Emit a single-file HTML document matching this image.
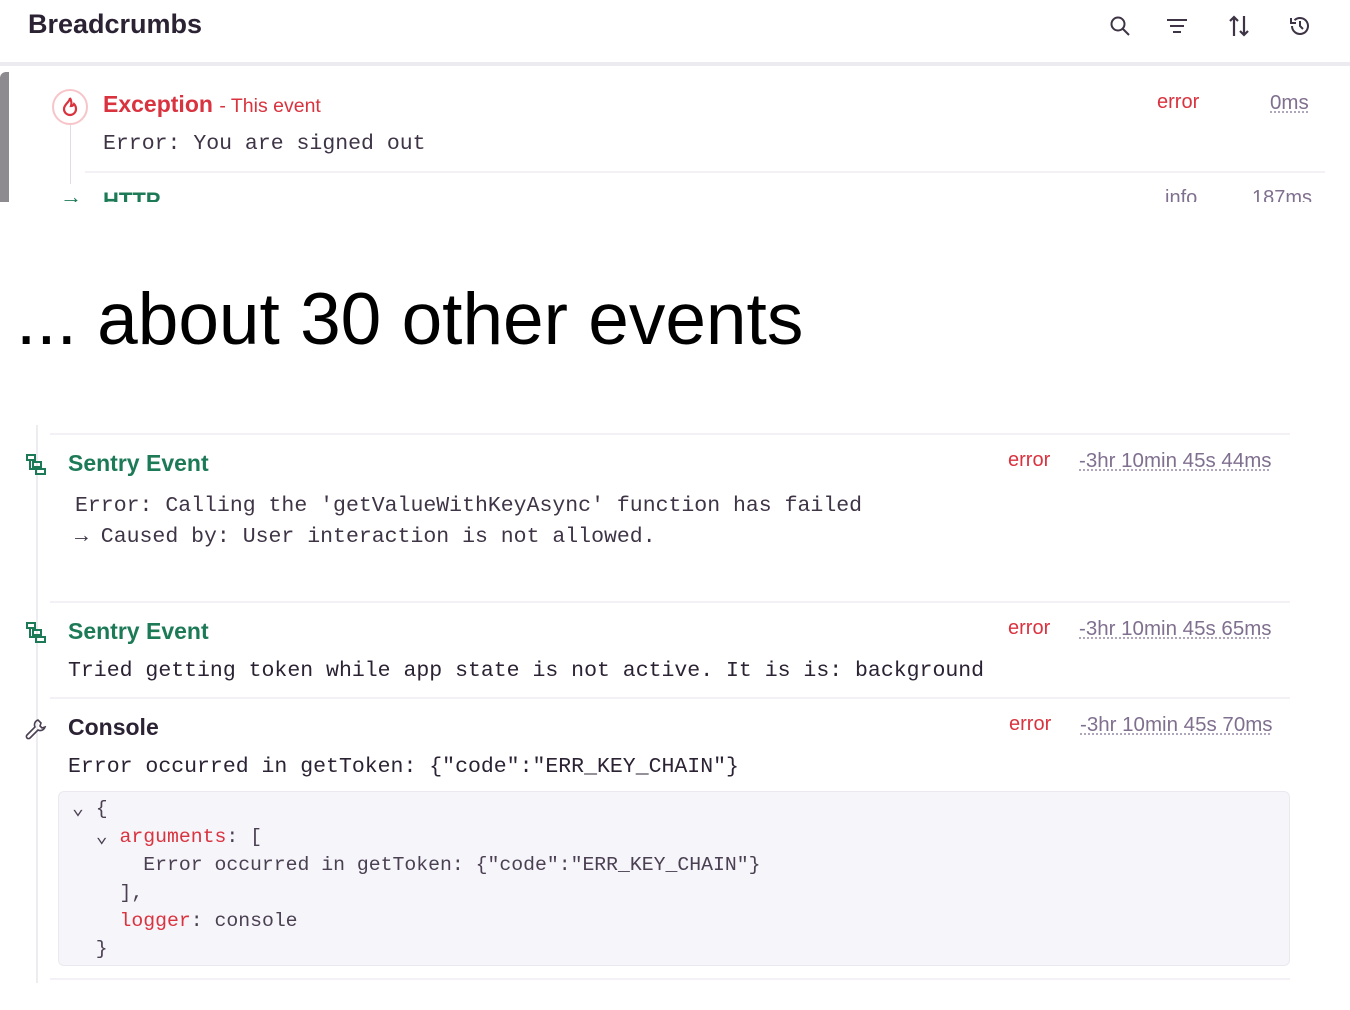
<!DOCTYPE html>
<html><head><meta charset="utf-8"><style>
*{margin:0;padding:0;box-sizing:border-box}
body{width:1350px;height:1010px;background:#fff;position:relative;overflow:hidden;font-family:"Liberation Sans",sans-serif;color:#2b2233}
.a{position:absolute;white-space:nowrap}
.mono{font-family:"Liberation Mono",monospace}
.red{color:#d9333f}
.green{color:#1d7a57;font-weight:bold}
.ts{color:#80708f;font-size:20.5px;text-decoration:underline dotted #b0a6bb}
.hr{position:absolute;height:2px;background:#f3f1f6}
</style></head><body>
<div class="a" style="left:28px;top:9px;font-size:27px;font-weight:bold;color:#2b2233">Breadcrumbs</div>
<svg class="a" style="left:1108px;top:14px" width="24" height="24" viewBox="0 0 24 24" fill="none" stroke="#3e3446" stroke-width="2"><circle cx="10" cy="10" r="6.5"/><path d="M15 15l6 6"/></svg>
<svg class="a" style="left:1165px;top:16px" width="24" height="20" viewBox="0 0 24 20" fill="none" stroke="#3e3446" stroke-width="2"><path d="M2 4h20M5 10h14M8 16h8"/></svg>
<svg class="a" style="left:1228px;top:14px" width="22" height="24" viewBox="0 0 22 24" fill="none" stroke="#3e3446" stroke-width="2.2"><path d="M6 22V3M2 7l4-4 4 4M16 2v19M12 17l4 4 4-4"/></svg>
<svg class="a" style="left:1288px;top:14px" width="24" height="24" viewBox="0 0 24 24" fill="none" stroke="#3e3446" stroke-width="2"><path d="M4 12a8 8 0 1 0 2.5-5.8"/><path d="M3 4v5h5"/><path d="M12 7v5l3 3"/></svg>
<div class="a" style="left:0;top:62px;width:1350px;height:4px;background:#ecebf0"></div>
<div class="a" style="left:0;top:72px;width:9px;height:130px;background:#8d8b8f;border-radius:6px 0 0 0"></div>
<div class="a" style="left:70px;top:122px;width:1px;height:62px;background:#e0dce5"></div>
<div class="a" style="left:52px;top:89px;width:36px;height:36px;border:2px solid #f7c5c9;border-radius:50%;background:#fff"></div>
<svg class="a" style="left:60px;top:96px" width="20" height="22" viewBox="0 0 20 22" fill="none" stroke="#d9333f" stroke-width="2.2"><path d="M10 2c0 4-6 6-6 11a6 6 0 0 0 12 0c0-3-2-5-2-5-1 2-2 2-3 2 1-3 0-6-1-8z"/></svg>
<div class="a red" style="left:103px;top:91px;font-size:23px;font-weight:bold">Exception <span style="font-size:19.5px;font-weight:normal">- This event</span></div>
<div class="a red" style="left:1157px;top:91px;font-size:20px">error</div>
<div class="a ts" style="left:1270px;top:91px">0ms</div>
<div class="a mono" style="left:103px;top:132px;font-size:21.5px;color:#3e3446">Error: You are signed out</div>
<div class="hr" style="left:85px;top:171px;width:1240px"></div>
<div style="position:absolute;left:0;top:180px;width:1350px;height:22px;overflow:hidden">
<div class="a" style="left:60px;top:4px;font-size:22px;color:#1d7a57">→</div>
<div class="a green" style="left:103px;top:8px;font-size:22px">HTTP</div>
<div class="a" style="left:1165px;top:7px;font-size:20px;color:#80708f">info</div>
<div class="a" style="left:1252px;top:7px;font-size:20px;color:#80708f">187ms</div>
</div>
<div class="a" style="left:16px;top:278px;font-size:73px;color:#000">... about 30 other events</div>

<div class="a" style="left:36px;top:425px;width:2px;height:558px;background:#eeecf1"></div>
<div class="hr" style="left:50px;top:433px;width:1240px"></div>
<svg class="a" style="left:24px;top:452px" width="24" height="24" viewBox="0 0 24 24" fill="none" stroke="#1d7a57" stroke-width="2"><rect x="3" y="3" width="8" height="5"/><rect x="9" y="10" width="8" height="5"/><rect x="12" y="17" width="9" height="5"/><path d="M6 8v9h6"/></svg>
<div class="a green" style="left:68px;top:450px;font-size:23px">Sentry Event</div>
<div class="a red" style="left:1008px;top:449px;font-size:20px">error</div>
<div class="a ts" style="left:1079px;top:449px">-3hr 10min 45s 44ms</div>
<div class="a mono" style="left:75px;top:494px;font-size:21.5px;color:#3e3446">Error: Calling the 'getValueWithKeyAsync' function has failed</div>
<div class="a mono" style="left:75px;top:525px;font-size:21.5px;color:#3e3446">→ Caused by: User interaction is not allowed.</div>

<div class="hr" style="left:50px;top:601px;width:1240px"></div>
<svg class="a" style="left:24px;top:620px" width="24" height="24" viewBox="0 0 24 24" fill="none" stroke="#1d7a57" stroke-width="2"><rect x="3" y="3" width="8" height="5"/><rect x="9" y="10" width="8" height="5"/><rect x="12" y="17" width="9" height="5"/><path d="M6 8v9h6"/></svg>
<div class="a green" style="left:68px;top:618px;font-size:23px">Sentry Event</div>
<div class="a red" style="left:1008px;top:617px;font-size:20px">error</div>
<div class="a ts" style="left:1079px;top:617px">-3hr 10min 45s 65ms</div>
<div class="a mono" style="left:68px;top:659px;font-size:21.5px;color:#2b2233">Tried getting token while app state is not active. It is is: background</div>

<div class="hr" style="left:50px;top:697px;width:1240px"></div>
<svg class="a" style="left:24px;top:717px" width="24" height="24" viewBox="0 0 24 24" fill="none" stroke="#4a4052" stroke-width="1.6"><path d="M14 3a5 5 0 0 0-3 7l-8 8a2 2 0 0 0 3 3l8-8a5 5 0 0 0 7-3l-3 1-2-2 1-3z"/></svg>
<div class="a" style="left:68px;top:714px;font-size:23px;font-weight:bold;color:#2b2233">Console</div>
<div class="a red" style="left:1009px;top:713px;font-size:20px">error</div>
<div class="a ts" style="left:1080px;top:713px">-3hr 10min 45s 70ms</div>
<div class="a mono" style="left:68px;top:755px;font-size:21.5px;color:#2b2233">Error occurred in getToken: {"code":"ERR_KEY_CHAIN"}</div>

<div class="a" style="left:58px;top:791px;width:1232px;height:175px;background:#f6f5fa;border:1px solid #ebe9ef;border-radius:6px"></div>
<div class="mono" style="position:absolute;left:72px;top:795px;font-size:19.8px;line-height:28px;color:#4a4052;white-space:pre">⌄ {
  ⌄ <span class="red">arguments</span>: [
      Error occurred in getToken: {"code":"ERR_KEY_CHAIN"}
    ],
    <span class="red">logger</span>: console
  }</div>
<div class="hr" style="left:50px;top:978px;width:1240px"></div>
</body></html>
